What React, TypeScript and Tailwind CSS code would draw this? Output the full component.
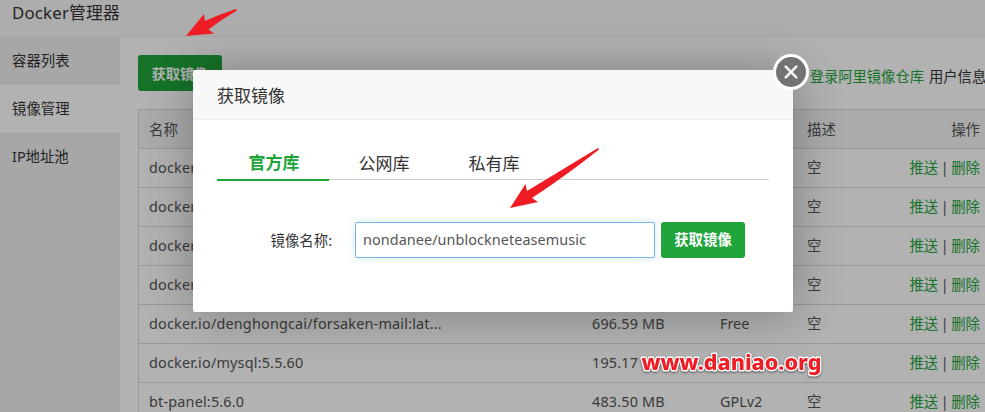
const rows = [
  { name: 'docker.io/redis', size: '', license: '' },
  { name: 'docker.io/nginx', size: '', license: '' },
  { name: 'docker.io/centos', size: '', license: '' },
  { name: 'docker.io/ubuntu', size: '', license: '' },
  { name: 'docker.io/denghongcai/forsaken-mail:lat...', size: '696.59 MB', license: 'Free' },
  { name: 'docker.io/mysql:5.5.60', size: '195.17', license: '' },
  { name: 'bt-panel:5.6.0', size: '483.50 MB', license: 'GPLv2' },
];

const cols = 'grid grid-cols-[443px_128px_87px_1fr] pl-[10px] pr-[5px]';

function Row({ name, size, license }: { name: string; size: string; license: string }) {
  return (
    <div className={`${cols} h-[39px] items-center border-b border-[#dcdcdc]`}>
      <span className="tracking-[0.19px] whitespace-nowrap">{name}</span>
      <span className="tracking-[0.19px]">{size}</span>
      <span>{license}</span>
      <div className="flex justify-between">
        <span>{size === '195.17' ? '' : '空'}</span>
        <span className="flex whitespace-nowrap">
          <span className="text-[#20a53a]">推送</span>
          <span className="w-[13px] text-center">|</span>
          <span className="text-[#20a53a]">删除</span>
        </span>
      </div>
    </div>
  );
}

function Page() {
  return (
    <div className="flex h-full flex-col">
      <header className="flex h-[37px] shrink-0 items-center border-b border-[#eee] bg-[#f8f8f8] pb-[10px] pl-3 text-[16.8px] tracking-[0.2px] text-[#333]">
        Docker管理器
      </header>
      <div className="flex min-h-0 flex-1">
        <nav className="w-[120px] shrink-0 bg-[#f0f0f0] text-[14.4px] text-[#333]">
          <div className="flex h-12 items-center pl-3">容器列表</div>
          <div className="flex h-12 items-center bg-white pl-3">镜像管理</div>
          <div className="flex h-12 items-center pl-3">IP地址池</div>
        </nav>
        <main className="min-w-0 flex-1 pl-[18px] pt-[18px]">
          <div className="flex h-9 justify-between">
            <button className="w-[84px] rounded-[3px] bg-[#20a53a] pt-px text-[14.2px] font-bold text-white">获取镜像</button>
            <div className="flex pt-[11px] text-[14.3px] whitespace-nowrap text-[#333]">
              <span className="mr-[5px] text-[#20a53a]">登录阿里镜像仓库</span>
              <span className="w-[56px]">用户信息</span>
            </div>
          </div>
          <div className="mt-[18px] border-t border-l border-[#dcdcdc] text-[14.4px] text-[#555]">
            <div className={`${cols} h-[39px] items-center border-b border-[#dcdcdc] bg-[#f5f5f5] pt-px`}>
              <span>名称</span>
              <span />
              <span />
              <div className="flex justify-between">
                <span>描述</span>
                <span>操作</span>
              </div>
            </div>
            {rows.map((row) => (
              <Row key={row.name} {...row} />
            ))}
          </div>
        </main>
      </div>
    </div>
  );
}

function Dialog() {
  return (
    <section className="absolute top-[70px] left-[193px] h-[242px] w-[600px] rounded-[2px] bg-white shadow-[1px_1px_50px_rgba(0,0,0,0.3)]">
      <h2 className="flex h-[50px] items-center rounded-t-[2px] border-b border-[#eee] bg-[#f8f8f8] pt-[3px] pl-6 text-[17px] text-[#333]">
        获取镜像
      </h2>
      <div className="mx-6 mt-6 flex h-[36px] border-b border-[#ccc] text-[17px] text-[#333]">
        <div className="-mb-[2px] flex w-28 items-center justify-center border-b-2 border-[#20a53a] pt-[3px] pl-[2px] font-bold text-[#20a53a]">官方库</div>
        <div className="flex w-[110px] items-center justify-center pt-[4px]">公网库</div>
        <div className="flex w-[110px] items-center justify-center pt-[4px]">私有库</div>
      </div>
      <div className="mt-[42px] flex h-9 items-center text-[14.4px]">
        <label className="w-[162px] pt-[2px] pr-[23px] text-right text-[#333]">镜像名称:</label>
        <div className="flex h-9 w-[300px] items-center rounded-[2px] border border-[#79b4e2] pl-[7px] text-[#555] shadow-[0_0_8px_rgba(102,175,233,0.3)]">
          <span className="tracking-[0.08px]">nondanee/unblockneteasemusic</span>
        </div>
        <button className="ml-[6px] h-9 w-[84px] rounded-[3px] bg-[#20a53a] text-[14.4px] font-bold text-white">获取镜像</button>
      </div>
      <button className="absolute -top-[16px] left-[580px] flex size-[36px] items-center justify-center rounded-full border-[3.5px] border-white bg-[#737373]">
        <svg width="14" height="14" viewBox="0 0 14 14" stroke="#f5f5f5" strokeWidth="2.5" strokeLinecap="round">
          <path d="M1.7 1.7 12.3 12.3M12.3 1.7 1.7 12.3" />
        </svg>
      </button>
    </section>
  );
}

export default function App() {
  return (
    <div className="relative h-[412px] w-[985px] overflow-hidden bg-white font-['Noto_Sans','Noto_Sans_CJK_SC',sans-serif]">
      <Page />
      <div className="absolute inset-0 bg-black/30" />
      <Dialog />
      <svg className="absolute inset-0" width="985" height="412" viewBox="0 0 985 412">
        <g fill="#f01c24">
          <path d="M186 36 204 14 205 21Q220 14 236 9L237 10.5Q222 19 208.5 29.5L214 33.5Z" />
          <path d="M510 208 525.5 184 527 191 598 148 599 149.5Q567 175 532 198L538 202Z" />
        </g>
        <text
          x="641.5"
          y="369.5"
          textLength="180"
          lengthAdjust="spacingAndGlyphs"
          fontSize="22"
          fontWeight="800"
          fill="#f01c24"
          stroke="white"
          strokeWidth="2.8"
          strokeLinejoin="round"
          paintOrder="stroke"
          className="font-['Noto_Sans',sans-serif] drop-shadow-[0_1px_1px_rgba(0,0,0,0.5)]"
        >
          www.daniao.org
        </text>
      </svg>
    </div>
  );
}
